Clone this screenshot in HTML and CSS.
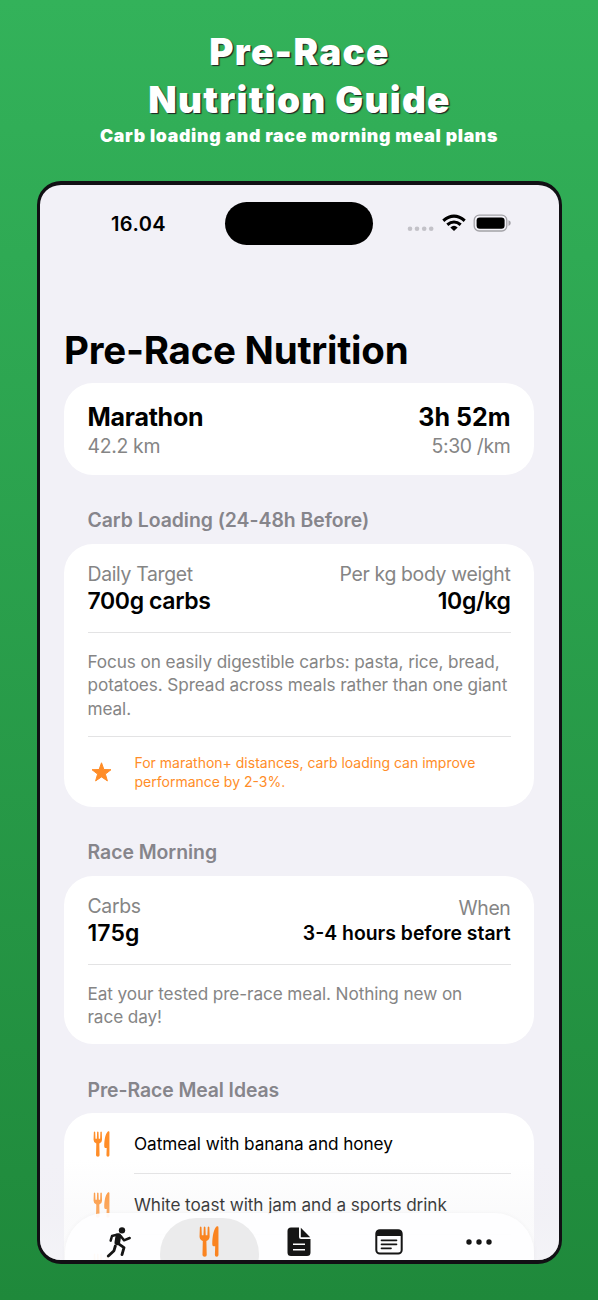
FILE: index.html
```html
<!DOCTYPE html>
<html lang="en">
<head>
<meta charset="utf-8">
<title>Pre-Race Nutrition Guide</title>
<link rel="stylesheet" href="styles.css">
</head>
<body>
<svg class="defs" width="0" height="0" aria-hidden="true">
  <symbol id="fork-knife" viewBox="0 0 60 95">
    <path d="M2 4Q4.500 -1 7 4L8 28H13L14 4Q16.500 -1 19 4L20 28H25L26 4Q28.500 -1 31 4L32 32Q32 42 22 46L23 89Q23 94 17 94Q10 94 10 89L11 46Q1 42 1 32Z"/>
    <path d="M59 5V89Q59 94 53.500 94Q48 94 48 89L49 62H44Q40 62 40 56C40 30 45 8 54 1Q59 -1 59 5Z"/>
  </symbol>
</svg>
<main class="poster">
  <h1 class="headline">Pre-Race<br>Nutrition Guide</h1>
  <p class="tagline">Carb loading and race morning meal plans</p>

  <section class="phone">
    <div class="status">
      <span class="time">16.04</span>
      <span class="island"></span>
      <svg class="signals" width="104" height="20" viewBox="0 0 104 20">
        <g fill="#c3c2c8"><circle cx="3" cy="13.800" r="2.300"/><circle cx="10" cy="13.800" r="2.300"/><circle cx="17.200" cy="13.800" r="2.300"/><circle cx="24.200" cy="13.800" r="2.300"/></g>
        <g fill="none" stroke="#000" stroke-width="3.100"><path d="M36.300 5.700Q47 -3.500 57.700 5.700"/><path d="M40.300 9.800Q47 4.200 53.700 9.800"/></g>
        <path d="M43.300 12.400Q47 9.300 50.700 12.400L47 16Z"/>
        <rect x="67.200" y=".2" width="32.600" height="15.800" rx="5" fill="none" stroke="#a3a2a7" stroke-width="1.300"/>
        <rect x="69.600" y="2.400" width="28" height="11.400" rx="3.200"/>
        <path d="M101.500 5.300Q103.800 6 103.800 8.100Q103.800 10.200 101.500 11Z" fill="#a3a2a7"/>
      </svg>
    </div>

    <div class="content">
      <h2 class="title"><span>Pre-Race Nutrition</span></h2>

      <div class="card summary">
        <div class="pair race"><span class="t-marathon">Marathon</span><span class="t-time">3h 52m</span></div>
        <div class="pair label"><span>42.2 km</span><span>5:30 /km</span></div>
      </div>

      <h3 class="section-title">Carb Loading (24-48h Before)</h3>
      <div class="card loading">
        <div class="pair label"><span>Daily Target</span><span>Per kg body weight</span></div>
        <div class="pair value"><span>700g carbs</span><span>10g/kg</span></div>
        <p class="note ruled">Focus on easily digestible carbs: pasta, rice, bread,<br>potatoes. Spread across meals rather than one giant<br>meal.</p>
        <div class="tip ruled">
          <svg class="star" width="21" height="20" viewBox="0 0 21 20"><path d="M10.500 .8L12.900 7.500L20 7.700L14.400 12.100L16.400 18.900L10.500 14.900L4.600 18.900L6.600 12.100L1 7.700L8.100 7.500Z" stroke-width="1" stroke-linejoin="round"/></svg>
          <p>For marathon+ distances, carb loading can improve<br>performance by 2-3%.</p>
        </div>
      </div>

      <h3 class="section-title">Race Morning</h3>
      <div class="card morning">
        <div class="split">
          <div><div class="label">Carbs</div><div class="value grams">175g</div></div>
          <div class="when"><div class="label">When</div><div class="start">3-4 hours before start</div></div>
        </div>
        <p class="note ruled">Eat your tested pre-race meal. Nothing new on<br>race day!</p>
      </div>

      <h3 class="section-title ideas">Pre-Race Meal Ideas</h3>
      <div class="card meals">
        <div class="meal"><svg class="fk"><use href="#fork-knife"/></svg><span>Oatmeal with banana and honey</span></div>
        <div class="meal"><svg class="fk"><use href="#fork-knife"/></svg><span>White toast with jam and a sports drink</span></div>
        <div class="meal"><svg class="fk"><use href="#fork-knife"/></svg><span></span></div>
      </div>
    </div>

    <div class="fade"></div>
    <nav class="tabs">
      <a class="tab"><svg width="26" height="31" viewBox="0 0 78 93"><circle cx="48" cy="10" r="9.500"/><g fill="none" stroke="#151515" stroke-linecap="round" stroke-linejoin="round"><path d="M37 27L34 46" stroke-width="17"/><path d="M33 23L18 27L14 41M44 27L54 40L71 33" stroke-width="7.500"/><path d="M37 50L54 62L48 83M28 57L24 71L7 87" stroke-width="8.500"/></g></svg></a>
      <a class="tab active"><svg width="20" height="31"><use href="#fork-knife"/></svg></a>
      <a class="tab"><svg width="24" height="30" viewBox="0 0 24 30"><path fill-rule="evenodd" d="M4 .5H12V10Q12 12 14 12H23.500V25.500Q23.500 29 20 29H4Q.5 29 .5 25.500V4Q.5 .5 4 .5ZM6 16.500V18H18V16.500ZM6 22V23.500H18V22Z"/><path d="M13.800 .8L23.200 10.300H13.800Z"/></svg></a>
      <a class="tab"><svg width="28" height="26" viewBox="0 0 28 26"><rect x="1.300" y="1.300" width="25.400" height="23.200" rx="3.500" fill="none" stroke="#151515" stroke-width="2"/><path d="M1 7V4Q1 1 4 1H24Q27 1 27 4V7Z"/><path d="M6.500 11.300H21.500M6.500 15.300H21.500M6.500 19.300H16" stroke="#151515" stroke-width="1.700" stroke-linecap="round"/></svg></a>
      <a class="tab"><svg width="26" height="6" viewBox="0 0 26 6"><circle cx="3" cy="3" r="2.700"/><circle cx="13" cy="3" r="2.700"/><circle cx="23" cy="3" r="2.700"/></svg></a>
    </nav>
  </section>
</main>
</body>
</html>
```
FILE: styles.css
```css
* { box-sizing: border-box; margin: 0; padding: 0; }
body { font-family: Inter, "Liberation Sans", sans-serif; color: #000; }
.defs { position: absolute; }
.poster {
  width: 598px; height: 1300px; padding-top: 28px; overflow: hidden;
  background: linear-gradient(#33b25a, #1f893b);
}
.headline {
  padding-left: 1px;
  text-align: center; color: #fff; font-size: 37px; line-height: 47.500px;
  font-weight: 900; letter-spacing: 1.250px; text-shadow: 1.300px 1.300px 1px #222;
}
.tagline {
  text-align: center; color: #fff; font-size: 17.700px; line-height: 26px; height: 58px;
  font-weight: 900; letter-spacing: .680px; white-space: nowrap;
}
.phone {
  position: relative; width: 525px; height: 1083px; margin-left: 37px; overflow: hidden;
  border: solid #111014; border-width: 4px 3px; border-radius: 24px; background: #f2f1f7;
}
.status { display: flex; height: 140px; padding: 17px 0 0 71px; align-items: flex-start; }
.time { width: 114px; font-size: 20px; line-height: 44px; font-weight: 600; letter-spacing: .4px; }
.island { width: 148px; height: 43px; border-radius: 22px; background: #000; }
.signals { margin: 13px 0 0 33.500px; overflow: visible; }
.content { padding: 0 25px 0 24px; white-space: nowrap; }
.title { height: 58px; font-size: 38.500px; line-height: 50px; font-weight: 700; letter-spacing: -.24px; }
.card { background: #fff; border-radius: 29px; padding: 0 23.500px; }
.pair { display: flex; justify-content: space-between; }
.summary { height: 92px; padding-top: 20px; }
.race { font-size: 25px; line-height: 28px; font-weight: 700; }
.t-marathon { letter-spacing: -.25px; }
.label { font-size: 19.400px; line-height: 29px; color: #858585; letter-spacing: -.33px; }
.summary .label { line-height: 31px; }
.value { height: 27px; font-size: 23px; line-height: 25px; font-weight: 600; letter-spacing: -.37px; }
.grams { letter-spacing: .1px; }
.section-title { height: 69px; padding: 30px 0 0 23.500px; font-size: 19.400px; line-height: 30px; font-weight: 600; color: #86858b; letter-spacing: -.03px; }
.ideas { padding-top: 31px; letter-spacing: -.08px; }
.loading { height: 263px; padding-top: 16px; }
.ruled { border-top: 1px solid #e3e3e4; }
.note { font-size: 17.200px; line-height: 23.600px; color: #858585; letter-spacing: -.1px; }
.loading .note { margin-top: 16px; height: 104px; padding-top: 16.500px; }
.tip { display: flex; align-items: center; height: 71px; color: #ff8d28; font-size: 14px; line-height: 19px; }
.star { width: 21px; margin: 0 22.500px 0 3.500px; fill: #ff8d28; stroke: #ff8d28; }
.morning { height: 168px; padding-top: 16px; }
.split { display: flex; justify-content: space-between; height: 72px; }
.when { padding-top: 2px; text-align: right; }
.start { font-size: 19.400px; line-height: 21px; font-weight: 600; }
.morning .note { padding-top: 16.800px; }
.meals { height: 200px; }
.meal { display: flex; align-items: center; height: 60px; font-size: 17.200px; color: #000; letter-spacing: -.08px; }
.meal + .meal { height: 61px; }
.meal span { flex: 1; height: 100%; line-height: 61px; }
.meal + .meal span { border-top: 1px solid #e3e3e4; }
.fk { width: 17px; height: 26px; margin: 2px 24px 0 5.500px; fill: #ff8d28; }
.fade {
  position: absolute; left: 0; right: 0; bottom: 0; height: 100px;
  background: linear-gradient(rgba(240,240,243,0), rgba(240,240,243,.3) 55%, rgba(246,246,248,.5));
}
.tabs {
  position: absolute; left: 24.500px; top: 1028px; width: 469px; height: 82px; padding: 5px 9.500px 0;
  display: flex; border-radius: 40px; background: rgba(254,254,255,.93); box-shadow: 0 0 5px rgba(0,0,0,.04);
}
.tab { flex: none; width: 90px; display: flex; height: 72px; padding-bottom: 24px; align-items: center; justify-content: center; fill: #151515; }
.active { width: 99px; margin: 0 -4.500px; padding-bottom: 26px; border-radius: 36px; background: #ebebec; fill: #fa8420; }
```
